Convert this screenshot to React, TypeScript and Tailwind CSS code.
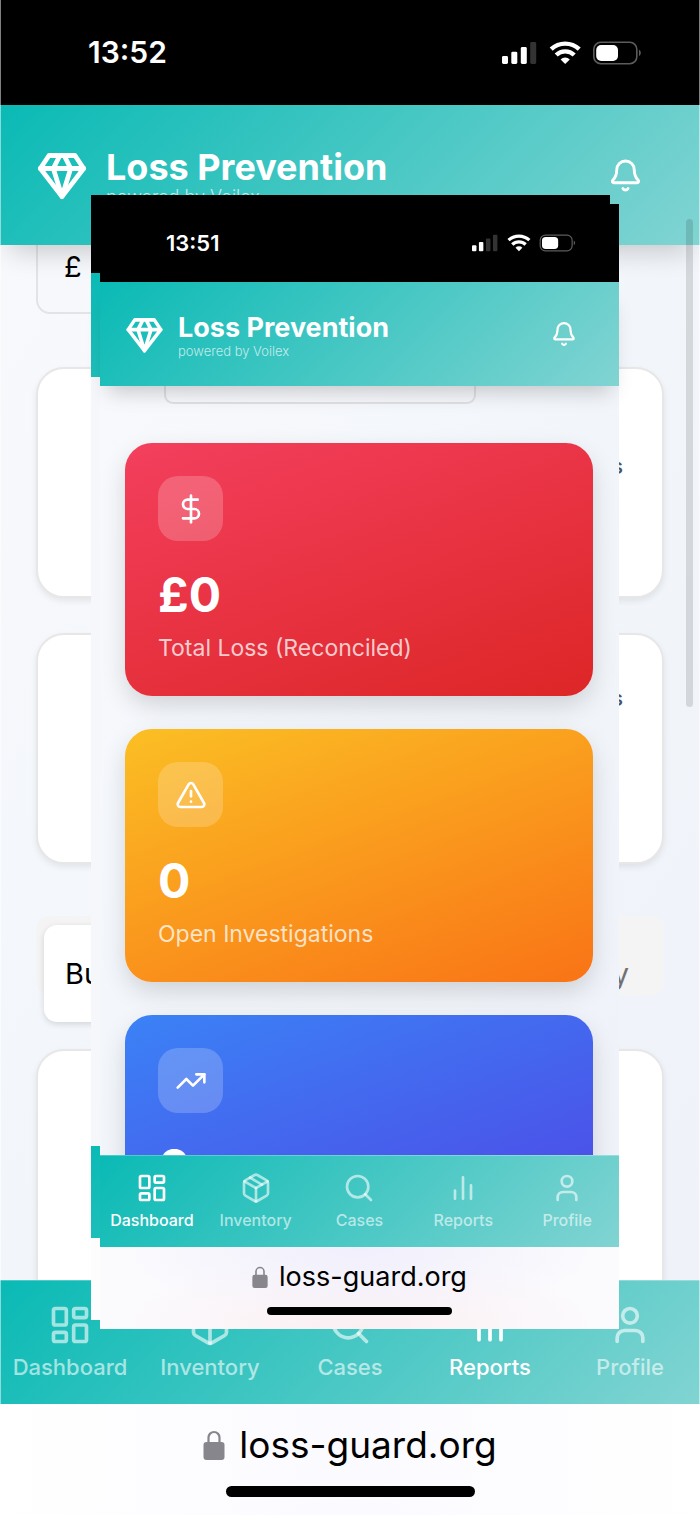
import type { ReactNode } from "react";
import { Bell, DollarSign, LayoutDashboard, Package, Search, TrendingUp, TriangleAlert, User } from "lucide-react";
import clsx from "clsx";

type Size = "lg" | "sm";

const TEAL = "bg-linear-[135deg,#0abab5,#81d4d2]";

function GemIcon({ className }: { className: string }) {
  return (
    <svg viewBox="0 0 24 24" fill="none" stroke="currentColor" strokeWidth="2.2" strokeLinecap="round" strokeLinejoin="round" className={className} aria-hidden="true">
      <path d="M6 3h12l4 6-10 13L2 9Z" />
      <path d="M11 3 8 9l4 13 4-13-3-6" />
      <path d="M2 9h20" />
    </svg>
  );
}

function BarsIcon({ className }: { className?: string }) {
  return (
    <svg viewBox="0 0 24 24" fill="none" stroke="currentColor" strokeWidth="2" strokeLinecap="round" className={className} aria-hidden="true">
      <path d="M18 20V10M12 20V4M6 20v-6" />
    </svg>
  );
}

function LockIcon({ className }: { className: string }) {
  return (
    <svg viewBox="0 0 22 30" className={className} aria-hidden="true">
      <path d="M5.5 13V7.5a5.5 5.5 0 0 1 11 0V13" fill="none" stroke="#87868c" strokeWidth="2.2" />
      <rect x="0.5" y="12" width="21" height="18" rx="3" fill="#87868c" />
    </svg>
  );
}

// Signal, wifi and battery
function StatusIcons({ level, className }: { level: number; className: string }) {
  const bars = [
    { x: 0, y: 15 },
    { x: 9.3, y: 10.7 },
    { x: 18.8, y: 6 },
    { x: 28.2, y: 1 },
  ];
  return (
    <svg viewBox="0 0 140 24" className={className} aria-hidden="true">
      {bars.map((b, i) => (
        <rect key={b.x} x={b.x} y={b.y} width="6" height={23 - b.y} rx="1.4" fill={i < level ? "#fff" : "#333"} />
      ))}
      <g fill="none" stroke="#fff" strokeWidth="4.4">
        <path d="M49.2 8.2a20.5 20.5 0 0 1 28 0" />
        <path d="M54.2 14a13 13 0 0 1 18 0" />
      </g>
      <path d="M58.6 18.4a6.6 6.6 0 0 1 9.2 0L63.2 23Z" fill="#fff" />
      <rect x="91.8" y="1.3" width="43" height="21.4" rx="7" fill="none" stroke="#5c5c5c" strokeWidth="1.6" />
      <rect x="94.2" y="4" width="21.8" height="16" rx="5" fill="#fff" />
      <path d="M137 8.8c2.4 1.2 2.4 5 0 6.2Z" fill="#5c5c5c" />
    </svg>
  );
}

function StatusBar({ size, time, level }: { size: Size; time: string; level: number }) {
  const lg = size === "lg";
  return (
    <div
      className={clsx(
        "flex shrink-0 items-center justify-between bg-black font-semibold text-white",
        lg ? "h-[105px] pr-[58px] pl-[88px] text-[30px]" : "h-[78px] pr-[43px] pl-[66px] text-[22px]",
      )}
    >
      <span>{time}</span>
      <StatusIcons level={level} className={lg ? "h-[24px] w-[140px]" : "h-[18px] w-[104px]"} />
    </div>
  );
}

function Header({ size }: { size: Size }) {
  const lg = size === "lg";
  return (
    <header
      className={clsx(
        "relative z-10 flex shrink-0 items-center text-white",
        TEAL,
        lg
          ? "h-[140px] pr-[57px] pl-[36px] shadow-[0_16px_26px_-10px_rgba(0,0,0,0.2)]"
          : "h-[104px] pr-[42px] pl-[25px] shadow-[0_14px_20px_-8px_rgba(0,0,0,0.2)]",
      )}
    >
      <GemIcon className={lg ? "size-[52px]" : "size-[39px]"} />
      <div className={clsx("flex-1", lg ? "ml-[18px] pt-2" : "ml-[14px] pt-1.5")}>
        <h1 className={clsx("font-bold", lg ? "text-[36px] leading-[36px]" : "text-[27px] leading-[28px]")}>Loss Prevention</h1>
        <p className={clsx("font-light text-white/70", lg ? "text-[18px] leading-[24px]" : "text-[13px] leading-[18px]")}>powered by Voilex</p>
      </div>
      <button type="button" aria-label="Notifications">
        <Bell className={lg ? "size-[35px]" : "size-[26px]"} />
      </button>
    </header>
  );
}

const TABS = [
  { label: "Dashboard", Icon: LayoutDashboard },
  { label: "Inventory", Icon: Package },
  { label: "Cases", Icon: Search },
  { label: "Reports", Icon: BarsIcon },
  { label: "Profile", Icon: User },
];

function BottomNav({ size, active }: { size: Size; active: string }) {
  const lg = size === "lg";
  return (
    <nav className={clsx("grid shrink-0 grid-cols-5 border-t border-white/20", TEAL, lg ? "h-[124px] pt-[22px]" : "h-[92px] pt-4")}>
      {TABS.map(({ label, Icon }) => (
        <a
          key={label}
          href={`#${label.toLowerCase()}`}
          className={clsx(
            "flex flex-col items-center font-medium",
            lg ? "gap-[6px] text-[22px] leading-[28px]" : "gap-[6px] text-[16px] leading-[20px]",
            label === active ? "text-white" : "text-white/60",
          )}
        >
          <Icon className={lg ? "size-[44px]" : "size-[32px]"} />
          {label}
        </a>
      ))}
    </nav>
  );
}

function BrowserBar({ size }: { size: Size }) {
  const lg = size === "lg";
  return (
    <footer
      className={clsx(
        "flex shrink-0 flex-col items-center text-black",
        lg
          ? "h-[111px] gap-[18px] bg-linear-to-r from-white via-[#fbfaff] to-white pt-[18px]"
          : "h-[82px] gap-[13px] bg-[radial-gradient(ellipse_at_50%_0%,#f0effc,transparent_65%),radial-gradient(ellipse_at_50%_100%,#fbeff2,transparent_65%)] bg-[#fbfafd] pt-[13px]",
      )}
    >
      <div className={clsx("flex items-center", lg ? "gap-[14px] text-[37px] leading-[46px]" : "gap-[11px] text-[27px] leading-[34px]")}>
        <LockIcon className={lg ? "h-[30px] w-[22px]" : "h-[22px] w-[16px]"} />
        <span>loss-guard.org</span>
      </div>
      <div className={clsx("rounded-full bg-black", lg ? "h-[11px] w-[249px]" : "h-[8px] w-[185px]")} />
    </footer>
  );
}

function StatCard({ icon, value, label, tone }: { icon: ReactNode; value: string; label: string; tone: string }) {
  return (
    <section className={clsx("shrink-0 rounded-[27px] p-[33px] text-white shadow-[0_10px_26px_-2px_rgba(0,0,0,0.16)]", tone)}>
      <div className="flex size-[65px] items-center justify-center rounded-[20px] bg-white/20">{icon}</div>
      <div className="mt-6 text-[48px] leading-[60px] font-bold">{value}</div>
      <div className="mt-2 text-[23px] leading-[30px] text-white/75">{label}</div>
    </section>
  );
}

function Panel({ className, children }: { className: string; children?: ReactNode }) {
  return (
    <section className={clsx("shrink-0 rounded-[28px] border-2 border-[#e7e7e7] bg-white pr-[39px] text-right text-[22px] leading-[26px] font-medium text-slate-600 shadow-[0_3px_6px_rgba(0,0,0,0.08)]", className)}>
      {children}
    </section>
  );
}

function ReportsScreen() {
  return (
    <div className="flex h-screen flex-col">
      <StatusBar size="lg" time="13:52" level={3} />
      <Header size="lg" />
      <main className="flex min-h-0 flex-1 flex-col overflow-hidden bg-linear-to-br from-[#f8f9fd] via-[#f2f6fa] to-[#eff2f9] px-[36px]">
        <select
          aria-label="Currency"
          className="h-[69px] w-2/3 shrink-0 appearance-none rounded-b-[14px] border-2 border-t-0 border-[#e2e3e6] bg-[#f6f8fb] pb-[25px] pl-[26px] text-[29px] text-black"
        >
          <option>£</option>
        </select>
        <Panel className="mt-[53px] h-[231px] pt-[84px]">s</Panel>
        <Panel className="mt-[35px] h-[231px] pt-[50px]">s</Panel>
        <div role="tablist" className="mt-[52px] mb-[54px] flex h-[79px] shrink-0 items-start justify-between rounded-[14px] bg-[#f4f4f4] pt-[9px] pr-[35px] pl-[8px] text-[29px]">
          <button type="button" role="tab" aria-selected="true" className="h-[97px] w-1/3 rounded-[13px] bg-white pl-[21px] text-left text-black shadow-[0_2px_6px_rgba(0,0,0,0.14)]">
            Bu
          </button>
          <button type="button" role="tab" aria-selected="false" className="h-[97px] text-[#717171]">
            y
          </button>
        </div>
        <Panel className="h-[300px]" />
      </main>
      <BottomNav size="lg" active="Reports" />
      <BrowserBar size="lg" />
    </div>
  );
}

function DashboardScreen() {
  return (
    <div className="relative mt-[9px] ml-[9px] flex min-h-0 flex-1 flex-col">
      <StatusBar size="sm" time="13:51" level={2} />
      <Header size="sm" />
      <main className="flex min-h-0 flex-1 flex-col gap-[33px] overflow-hidden bg-linear-to-br from-[#f8f9fd] via-[#f2f6fa] to-[#eff2f9] pr-[26px] pl-[25px]">
        <div className="mb-[6px] ml-[39px] h-[18px] w-2/3 shrink-0 rounded-b-[9px] border-2 border-t-0 border-[#e0e1e4] bg-white/20" />
        <StatCard icon={<DollarSign className="size-8" />} value="£0" label="Total Loss (Reconciled)" tone="bg-linear-[160deg,#f43f5e,#dc2626]" />
        <StatCard icon={<TriangleAlert className="size-8" />} value="0" label="Open Investigations" tone="bg-linear-[160deg,#fbbf24,#f97316]" />
        <StatCard icon={<TrendingUp className="size-8" />} value="0" label="" tone="bg-linear-[160deg,#3b82f6,#4f46e5]" />
      </main>
      <BottomNav size="sm" active="Dashboard" />
      <BrowserBar size="sm" />
    </div>
  );
}

export default function App() {
  return (
    <div className="relative overflow-hidden bg-white font-['Inter','Liberation_Sans',sans-serif]">
      <ReportsScreen />
      {/* Light edges and scroll bar */}
      <div className="pointer-events-none absolute inset-0 z-20 border-x border-white/50" />
      <div className="absolute top-[219px] right-[7px] z-20 h-[488px] w-[7px] rounded-full bg-black/12" />

      <div className="absolute top-[195px] right-[81px] bottom-[186px] left-[13%] z-30 flex flex-col">
        {/* Second sheet peeking out behind the dashboard */}
        <div className="absolute inset-0 mr-[9px] mb-[9px] flex flex-col">
          <div className="h-[78px] bg-black" />
          <div className={clsx("h-[104px]", TEAL)} />
          <div className="flex-1 bg-[#f5f7fb]" />
          <div className={clsx("h-[92px]", TEAL)} />
          <div className="h-[82px] bg-[#fdfdfe]" />
        </div>
        <DashboardScreen />
      </div>
    </div>
  );
}
